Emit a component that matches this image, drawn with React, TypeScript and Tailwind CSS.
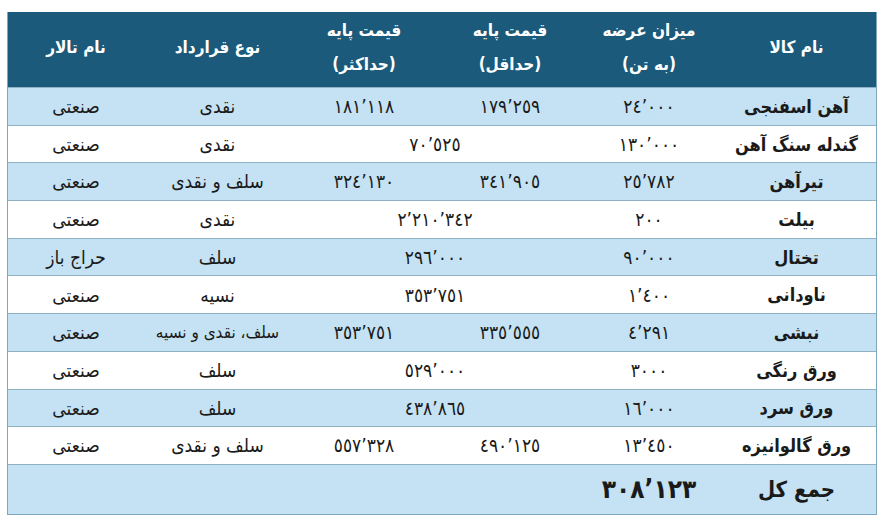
import React from "react";

// --------------------------------------------------------------
// Steel commodity offering table (RTL)

type Row = {
    name: string;
    supply: string;
    min?: string;
    max?: string;
    price?: string;
    contract: string;
    hall: string;
};

const rows: Row[] = [
    { name: "آهن اسفنجی", supply: "٢٤’٠٠٠", min: "١٧٩’٢٥٩", max: "١٨١’١١٨", contract: "نقدی", hall: "صنعتی" },
    { name: "گندله سنگ آهن", supply: "١٣٠’٠٠٠", price: "٧٠’٥٢٥", contract: "نقدی", hall: "صنعتی" },
    { name: "تیرآهن", supply: "٢٥’٧٨٢", min: "٣٤١’٩٠٥", max: "٣٢٤’١٣٠", contract: "سلف و نقدی", hall: "صنعتی" },
    { name: "بیلت", supply: "٢٠٠", price: "٢’٢١٠’٣٤٢", contract: "نقدی", hall: "صنعتی" },
    { name: "تختال", supply: "٩٠’٠٠٠", price: "٢٩٦’٠٠٠", contract: "سلف", hall: "حراج باز" },
    { name: "ناودانی", supply: "١’٤٠٠", price: "٣٥٣’٧٥١", contract: "نسیه", hall: "صنعتی" },
    { name: "نبشی", supply: "٤’٢٩١", min: "٣٣٥’٥٥٥", max: "٣٥٣’٧٥١", contract: "سلف، نقدی و نسیه", hall: "صنعتی" },
    { name: "ورق رنگی", supply: "٣٠٠٠", price: "٥٢٩’٠٠٠", contract: "سلف", hall: "صنعتی" },
    { name: "ورق سرد", supply: "١٦’٠٠٠", price: "٤٣٨’٨٦٥", contract: "سلف", hall: "صنعتی" },
    { name: "ورق گالوانیزه", supply: "١٣’٤٥٠", min: "٤٩٠’١٢٥", max: "٥٥٧’٣٢٨", contract: "سلف و نقدی", hall: "صنعتی" },
];

const gridCols = "grid grid-cols-[159px_136px_142px_150px_143px_140px]";

const HeaderCell = ({ top, bottom }: { top: string; bottom?: string }) => (
    <div className="flex flex-col items-center justify-center pb-[6px] leading-[34px] text-[17px] font-bold text-white">
        <span>{top}</span>
        {bottom && <span>{bottom}</span>}
    </div>
);

// numbers are shown digit by digit from left to right
const Num = ({ v }: { v: string }) => <bdo dir="ltr" className="text-[19px] tracking-[2.5px]">{v}</bdo>;

export default function App() {
    return (
        <div className="w-[883px] h-[528px] bg-white pt-[12px] pl-[7px]" style={{ fontFamily: '"DejaVu Sans Condensed", "DejaVu Sans", sans-serif' }}>
            <div dir="rtl" className="w-[870px] border-x border-b border-[#7ea7bf]">
                {/* header */}
                <div className={`${gridCols} h-[75px] bg-[#1b5a7a]`}>
                    <HeaderCell top="نام کالا" />
                    <HeaderCell top="میزان عرضه" bottom="(به تن)" />
                    <HeaderCell top="قیمت پایه" bottom="(حداقل)" />
                    <HeaderCell top="قیمت پایه" bottom="(حداکثر)" />
                    <HeaderCell top="نوع قرارداد" />
                    <HeaderCell top="نام تالار" />
                </div>

                {/* body rows */}
                {rows.map((r, i) => (
                    <div
                        key={r.name}
                        className={`${gridCols} h-[37.7px] items-center text-[19px] text-[#1a1a1a] border-t border-[#8fb2c6] ${i % 2 === 0 ? "bg-[#c4e2f3]" : "bg-white"}`}
                    >
                        <div className="text-center font-bold text-[18px]">{r.name}</div>
                        <div className="text-center"><Num v={r.supply} /></div>
                        {r.price ? (
                            <div className="col-span-2 text-center"><Num v={r.price} /></div>
                        ) : (
                            <>
                                <div className="text-center"><Num v={r.min!} /></div>
                                <div className="text-center"><Num v={r.max!} /></div>
                            </>
                        )}
                        <div className={`text-center ${r.contract.length > 12 ? "text-[17px]" : ""}`}>{r.contract}</div>
                        <div className="text-center">{r.hall}</div>
                    </div>
                ))}

                {/* total */}
                <div className={`${gridCols} h-[50px] items-center bg-[#c4e2f3] border-t border-[#8fb2c6] text-[#1a1a1a]`}>
                    <div className="text-center font-bold text-[22px]">جمع کل</div>
                    <div className="text-center font-bold text-[26px] tracking-[1px]"><bdo dir="ltr">٣٠٨’١٢٣</bdo></div>
                </div>
            </div>
        </div>
    );
}
